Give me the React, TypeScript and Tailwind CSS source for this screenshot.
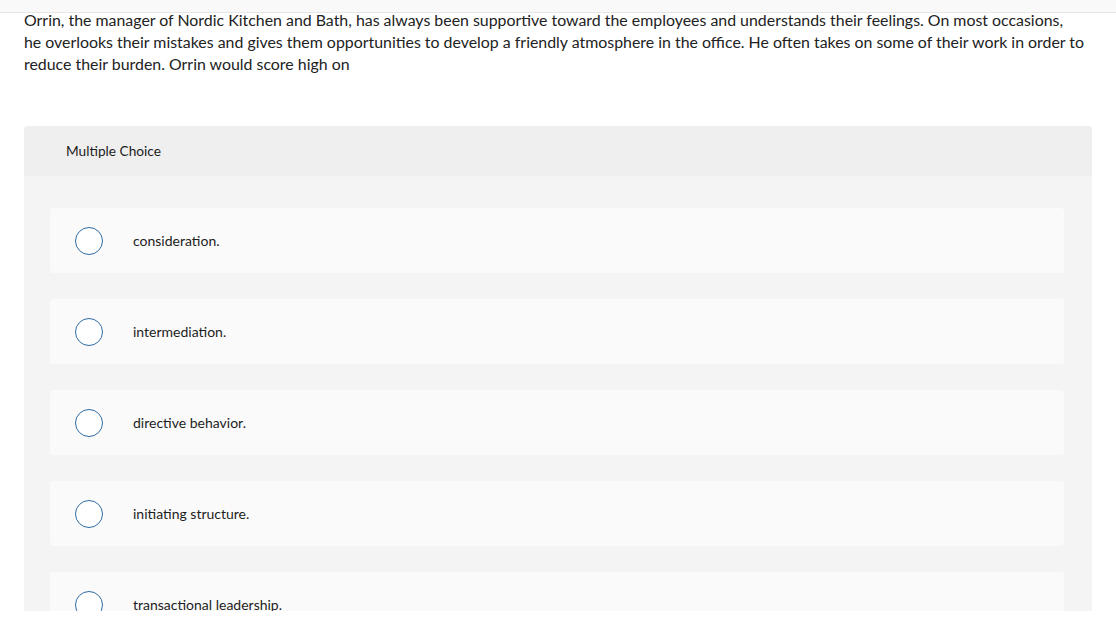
import React from 'react';

const OPTIONS = [
    'consideration.',
    'intermediation.',
    'directive behavior.',
    'initiating structure.',
    'transactional leadership.',
];

const Option = ({label}: {label: string}) => {
    return (
        <div className="flex items-center h-[65px] rounded bg-[#fafafa]">
            <div className="ml-[25px] w-[28px] h-[28px] rounded-full border-[1.5px] border-[#2f6ca3] bg-white shrink-0"/>
            <span className="ml-[30px] text-[14px] text-[#1d1d1d]">{label}</span>
        </div>
    )
}

const App = () => {
    return (
        <div className="h-[611px] overflow-hidden bg-white font-['Lato','Liberation_Sans',sans-serif]">
            <div className="h-[13px] bg-[#f9f9f9] border-b border-[#e6e6e6]"/>
            <div className="px-6">
                <p className="-mt-[4px] text-[15.9px] leading-[22px] text-[#222]">
                    Orrin, the manager of Nordic Kitchen and Bath, has always been supportive toward the employees and understands their feelings. On most occasions,<br/>
                    he overlooks their mistakes and gives them opportunities to develop a friendly atmosphere in the office. He often takes on some of their work in order to reduce their burden. Orrin would score high on
                </p>
                <div className="mt-[51px] rounded-t bg-[#f4f4f4]">
                    <div className="h-[50px] flex items-center px-[42px] bg-[#efefef] rounded-t">
                        <span className="text-[13.7px] text-[#1d1d1d]">Multiple Choice</span>
                    </div>
                    <div className="flex flex-col gap-[26px] pt-[32px] pl-[26px] pr-[28px] pb-8">
                        {OPTIONS.map(o => <Option key={o} label={o}/>)}
                    </div>
                </div>
            </div>
        </div>
    )
}

export default App;
